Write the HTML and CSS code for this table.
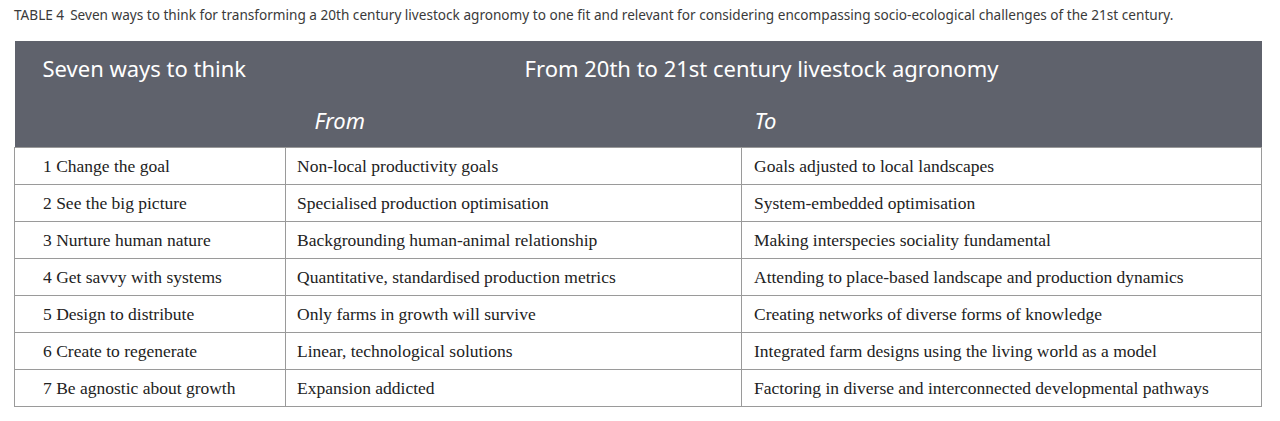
FILE: index.html
```html
<!DOCTYPE html>
<html>
<head>
<meta charset="utf-8">
<link rel="stylesheet" href="styles.css">
</head>
<body>
<div class="page">
  <p class="caption"><span class="label">TABLE 4</span>Seven ways to think for transforming a 20th century livestock agronomy to one fit and relevant for considering encompassing socio-ecological challenges of the 21st century.</p>
  <table class="ways">
    <colgroup>
      <col class="w1">
      <col class="w2">
      <col class="w3">
    </colgroup>
    <thead>
      <tr class="head1">
        <th class="c1">Seven ways to think</th>
        <th class="span" colspan="2">From 20th to 21st century livestock agronomy</th>
      </tr>
      <tr class="head2">
        <th class="c1"></th>
        <th class="c2 it">From</th>
        <th class="c3 it">To</th>
      </tr>
    </thead>
    <tbody>
      <tr><td class="c1">1 Change the goal</td><td class="c2">Non-local productivity goals</td><td class="c3">Goals adjusted to local landscapes</td></tr>
      <tr><td class="c1">2 See the big picture</td><td class="c2">Specialised production optimisation</td><td class="c3">System-embedded optimisation</td></tr>
      <tr><td class="c1">3 Nurture human nature</td><td class="c2">Backgrounding human-animal relationship</td><td class="c3">Making interspecies sociality fundamental</td></tr>
      <tr><td class="c1">4 Get savvy with systems</td><td class="c2">Quantitative, standardised production metrics</td><td class="c3">Attending to place-based landscape and production dynamics</td></tr>
      <tr><td class="c1">5 Design to distribute</td><td class="c2">Only farms in growth will survive</td><td class="c3">Creating networks of diverse forms of knowledge</td></tr>
      <tr><td class="c1">6 Create to regenerate</td><td class="c2">Linear, technological solutions</td><td class="c3">Integrated farm designs using the living world as a model</td></tr>
      <tr><td class="c1">7 Be agnostic about growth</td><td class="c2">Expansion addicted</td><td class="c3">Factoring in diverse and interconnected developmental pathways</td></tr>
    </tbody>
  </table>
</div>
</body>
</html>
```

FILE: styles.css
```css
html, body {
  margin: 0;
  padding: 0;
  background: #ffffff;
}
.page {
  padding: 6px 19px 0 14px;
}
.caption {
  margin: 0 0 17px 0;
  font-family: "Noto Sans", "Open Sans", sans-serif;
  font-size: 13.6px;
  line-height: 18px;
  color: #3a3a3a;
  white-space: nowrap;
}
.caption .label {
  margin-right: 6px;
}
.ways {
  width: 1247px;
  border-collapse: collapse;
  table-layout: fixed;
}
.w1 { width: 271px; }
.w2 { width: 456px; }
.w3 { width: 520px; }
.ways th {
  background: #5f626c;
  color: #ffffff;
  font-family: "Noto Sans", "Open Sans", sans-serif;
  font-weight: normal;
  font-size: 22px;
  text-align: left;
  padding: 0;
}
.head1 th {
  height: 54px;
}
.head1 .c1 {
  padding-left: 28px;
}
.head1 .span {
  text-align: center;
  padding-right: 24px;
}
.head2 th {
  height: 42px;
  vertical-align: top;
}
.head2 .it {
  font-style: italic;
  padding-top: 10px;
}
.head2 .c2 {
  padding-left: 29px;
}
.head2 .c3 {
  padding-left: 13px;
}
.ways td {
  border: 1px solid #9a9a9a;
  height: 36px;
  padding: 0;
  font-family: "Liberation Serif", "Times New Roman", serif;
  font-size: 17.5px;
  color: #222222;
  vertical-align: middle;
}
.ways td.c1 {
  padding-left: 28px;
}
.ways td.c2 {
  padding-left: 11px;
}
.ways td.c3 {
  padding-left: 12px;
}
```
